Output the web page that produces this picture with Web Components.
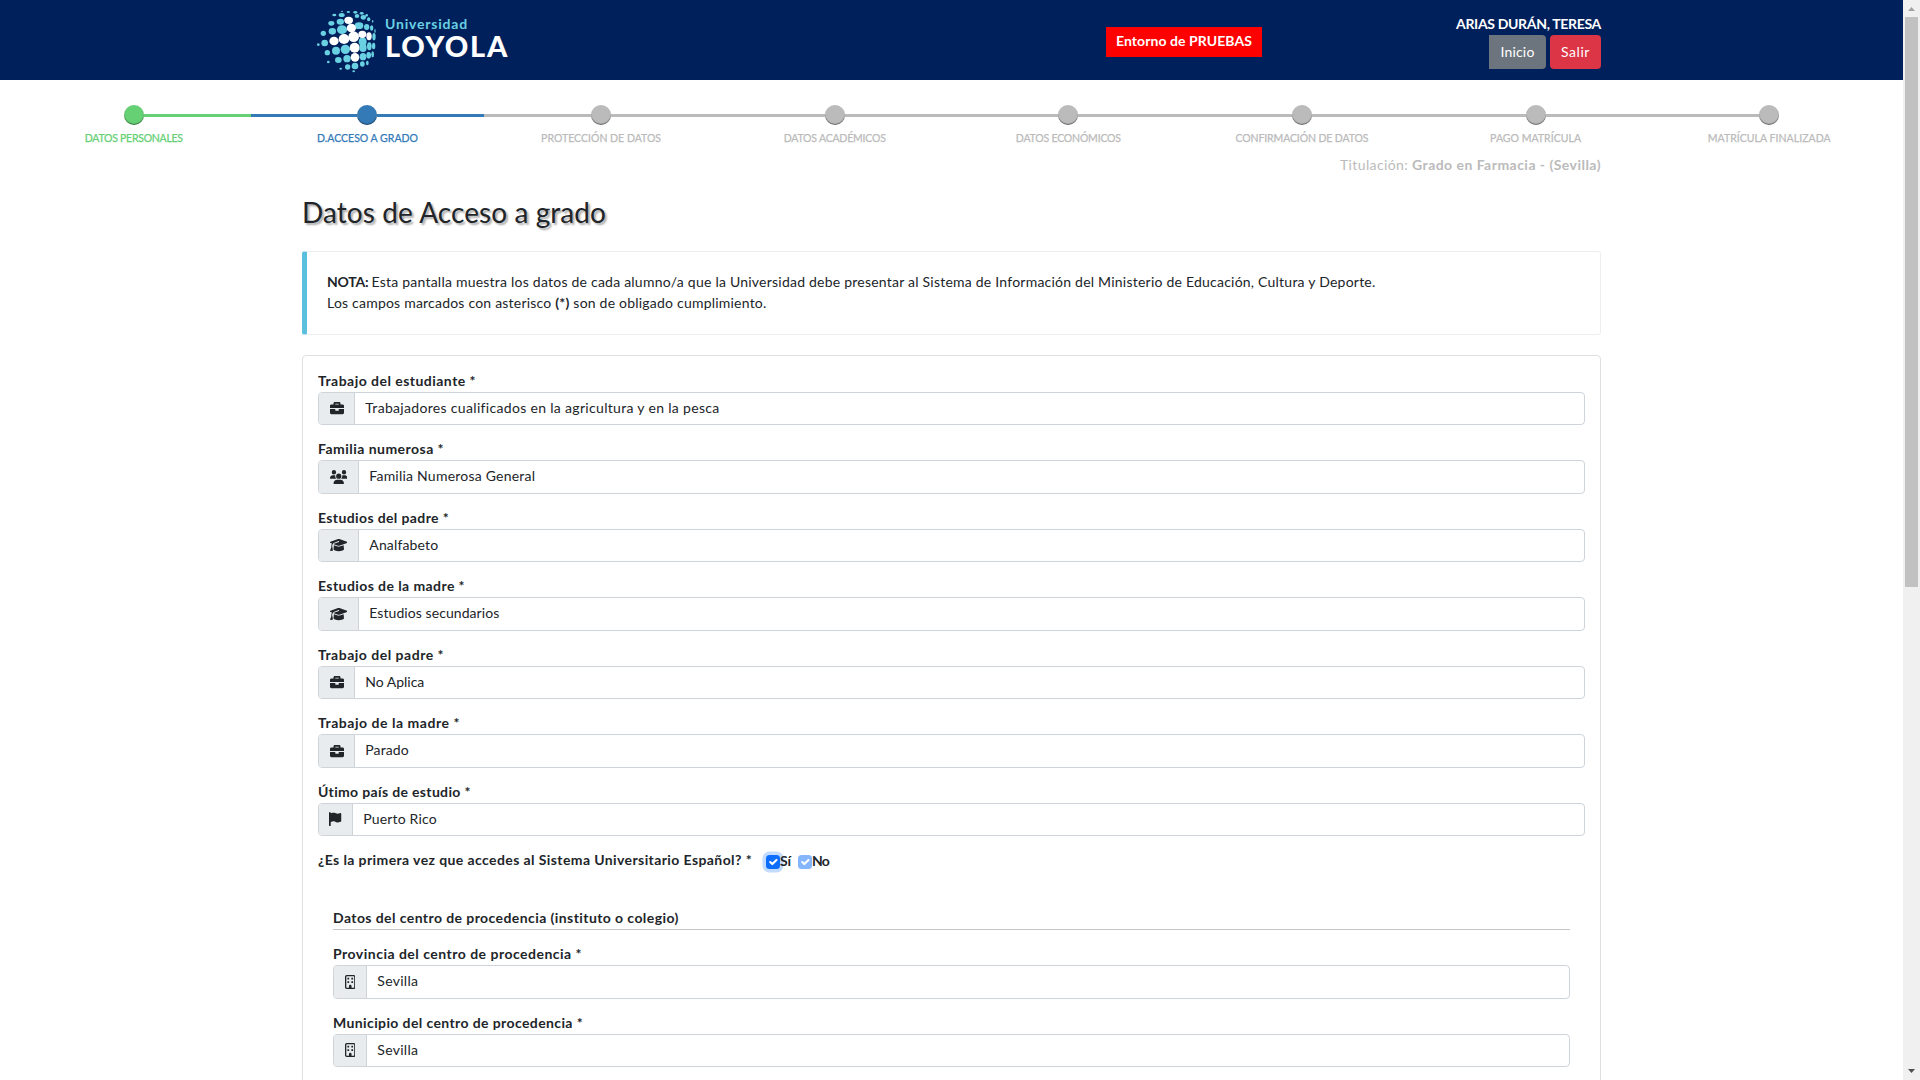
<!DOCTYPE html>
<html lang="es">
<head>
<meta charset="utf-8">
<title>Datos de Acceso a grado</title>
<style>
html,body{margin:0;height:100%;overflow:hidden;background:#fff}
body{font:14px/21px Lato,"Open Sans",sans-serif;color:#212529}
</style>
</head>
<body>
<enrol-page></enrol-page>
<script>
const ICONS = {
  briefcase: ['0 0 512 512', 'M320 336c0 8.800-7.200 16-16 16h-96c-8.800 0-16-7.200-16-16v-48H0v144c0 25.600 22.400 48 48 48h416c25.600 0 48-22.400 48-48V288H320v48zm144-208h-80V80c0-25.600-22.400-48-48-48H176c-25.600 0-48 22.400-48 48v48H48c-25.600 0-48 22.400-48 48v80h512v-80c0-25.600-22.400-48-48-48zm-144 0H192V96h128v32z', 14],
  users: ['0 0 640 512', 'M144 0a80 80 0 1 1 0 160 80 80 0 1 1 0-160zM512 0a80 80 0 1 1 0 160 80 80 0 1 1 0-160zM0 298.700C0 239.800 47.800 192 106.700 192h42.700c15.900 0 31 3.500 44.600 9.700-1.300 7.200-1.900 14.700-1.900 22.300 0 38.200 16.800 72.500 43.300 96H21.300C9.600 320 0 310.400 0 298.700zM405.300 320h-.7c26.600-23.500 43.300-57.800 43.300-96 0-7.600-.7-15-1.900-22.300 13.600-6.300 28.700-9.700 44.600-9.700h42.700C592.200 192 640 239.800 640 298.700c0 11.800-9.600 21.300-21.300 21.300H405.300zM224 224a96 96 0 1 1 192 0 96 96 0 1 1-192 0zM128 485.300C128 411.700 187.700 352 261.300 352h117.400C452.300 352 512 411.700 512 485.300c0 14.700-11.900 26.700-26.700 26.700H154.700c-14.700 0-26.700-11.900-26.700-26.700z', 17.5],
  cap: ['0 0 640 512', 'M320 32c-8.100 0-16.100 1.400-23.700 4.100L15.800 137.400C6.300 140.900 0 149.900 0 160s6.300 19.100 15.800 22.600l57.900 20.900C57.300 229.300 48 259.800 48 291.900V320c0 28.400-10.800 57.700-22.300 80.800-6.500 13-13.900 25.800-22.500 37.600C0 442.700-.9 448.300.9 453.400s6 8.900 11.200 10.200l64 16c4.200 1.100 8.700.3 12.400-2s6.300-6.100 7.100-10.400c8.600-42.800 4.300-81.200-2.100-108.700C90.300 344.300 86 329.800 80 316.500V291.900c0-30.200 10.200-58.700 27.900-81.500 12.900-15.500 29.600-28 49.200-35.700l157-61.700c8.200-3.200 17.500.8 20.700 9s-.8 17.500-9 20.700l-157 61.700c-12.400 4.900-23.300 12.400-32.200 21.600l159.600 57.600c7.600 2.700 15.600 4.100 23.700 4.100s16.100-1.400 23.700-4.100L624.200 182.600c9.500-3.400 15.800-12.500 15.800-22.600s-6.300-19.100-15.800-22.600L343.700 36.100C336.100 33.400 328.100 32 320 32zM128 408c0 35.300 86 72 192 72s192-36.700 192-72L496.700 262.600 354.500 314c-11.100 4-22.800 6-34.500 6s-23.500-2-34.500-6L143.300 262.600 128 408z', 17.500],
  flag: ['0 0 512 512', 'M64 32C64 14.300 49.700 0 32 0S0 14.300 0 32v464c0 8.800 7.200 16 16 16h32c8.800 0 16-7.200 16-16V364l64-16c41-10.300 84.500-5.500 122.300 13.400 44.200 22.100 95.500 24.800 141.700 7.400l34.700-13c12.500-4.700 20.800-16.600 20.800-30V66.100c0-23-24.200-38-44.800-27.700l-9.600 4.800c-46.300 23.200-100.800 23.200-147.100 0C214.600 25.600 174.200 21.200 136 30.700L64 48V32z', 14],
  building: ['0 0 384 512', 'M64 48c-8.800 0-16 7.200-16 16v384c0 8.800 7.200 16 16 16h80v-64c0-26.500 21.500-48 48-48s48 21.500 48 48v64h80c8.800 0 16-7.200 16-16V64c0-8.800-7.200-16-16-16H64zM0 64C0 28.700 28.700 0 64 0h256c35.300 0 64 28.700 64 64v384c0 35.300-28.700 64-64 64H64c-35.300 0-64-28.700-64-64V64zm88 40h64v64H88zM232 104h64v64h-64zM88 232h64v64H88zM232 232h64v64h-64z', 10.500]
};

function define(name, html, setup) {
  const t = document.createElement('template');
  t.innerHTML = html;
  customElements.define(name, class extends HTMLElement {
    connectedCallback() {
      if (this.shadowRoot) return;
      const root = this.attachShadow({mode: 'open'});
      root.append(t.content.cloneNode(true));
      if (setup) setup.call(this, root);
    }
  });
}

/* Text tracked to a given advance width. */
define('fit-text', `<style>:host{display:inline-block;white-space:nowrap}</style><span><slot></slot></span>`,
function (root) {
  const want = parseFloat(this.getAttribute('w'));
  const span = root.querySelector('span');
  const n = this.textContent.length;
  const natural = span.getBoundingClientRect().width;
  span.style.letterSpacing = ((want - natural) / n) + 'px';
});

define('uni-logo', `<style>
:host{display:flex;align-items:flex-start;font-family:Lato,sans-serif;font-weight:700}
svg{display:block;width:62px;height:66px}
.w{display:flex;flex-direction:column;padding:5px 0 0 7px}
.u{color:#6ad1e3;font-size:14px;line-height:20px}
.l{color:#fff;font-size:29px;line-height:26px;font-weight:900;margin-top:-1px}
</style><svg viewBox="0 0 186 198"></svg>
<div class="w"><fit-text class="u" w="83">Universidad</fit-text><fit-text class="l" w="124">LOYOLA</fit-text></div>`,
function (root) {
  /* x, y, rx, ry, white */
  const dots = [[78,7,3,2],[97,9,5,3],[118,10,6,4],[137,13,6,4],[152,19,4,4],
  [55,18,6,4],[77,18,9,6],[123,21,7,6],[142,25,8,7],[158,31,5,6],[170,37,2,4],
  [46,43,9,7],[73,38,11,9],[98,34,13,11,1],[129,50,13,10],[152,54,8,9],[167,57,5,8],[177,66,2,6],
  [22,73,8,8],[49,67,11,10],[78,62,15,13],[106,57,14,13,1],[140,98,12,13],[113,83,16,16,1],[139,76,12,11,1],[159,82,8,12,1],[174,83,5,11],
  [7,107,4,4],[26,102,10,10],[54,96,14,13,1],[84,90,16,15,1],
  [34,131,8,8],[60,125,12,12],[88,121,14,14],[116,116,15,15,1],[141,116,11,13],[160,112,7,12],[173,111,5,10],
  [37,159,4,4],[67,153,10,9],[93,149,11,11],[117,145,13,13,1],[141,143,10,11],[158,139,7,10],[170,136,4,9],
  [95,174,8,8],[117,171,10,10],[139,165,7,8],[154,162,4,7],[74,179,4,3],[113,187,4,3]];
  root.querySelector('svg').innerHTML = dots.map(d =>
    `<ellipse cx="${d[0]}" cy="${d[1]}" rx="${d[2]}" ry="${d[3]}" fill="${d[4] ? '#fff' : '#6ad1e3'}"/>`).join('');
});

define('app-header', `<style>
:host{display:block;height:80px;background:#00205b;color:#fff}
.in{width:1299px;margin-left:302px;display:flex;height:80px}
uni-logo{margin:9px 0 0 14px}
.env{margin:27px 0 0 auto;width:156px;height:30px;background:red;font-weight:700;display:flex;justify-content:center;line-height:27px}
.user{margin-left:194px;width:145px;padding-top:13px;display:flex;flex-direction:column;align-items:flex-end}
.name{font-weight:700}
.btns{display:flex;gap:4px;margin-top:1px}
.b{height:34px;line-height:33px;display:flex;justify-content:center;border-radius:4px}
.i{width:57px;background:#6c757d;border-radius:0 4px 4px 0}
.s{width:51px;background:#dc3545}
</style><div class="in"><uni-logo></uni-logo>
<div class="env"><fit-text w="136">Entorno de PRUEBAS</fit-text></div>
<div class="user"><fit-text class="name" w="145">ARIAS DURÁN, TERESA</fit-text>
<div class="btns"><div class="b i"><fit-text w="34">Inicio</fit-text></div><div class="b s"><fit-text w="29">Salir</fit-text></div></div></div></div>`);

define('step-item', `<style>
:host{flex:1;display:flex;flex-direction:column;align-items:center;--c:#bbb;color:var(--c);font-size:10.500px;font-weight:400;-webkit-text-stroke:.25px}
:host([state=done]){--c:#65d074}
:host([state=now]){--c:#337ab7}
.r{display:flex;align-items:center;align-self:stretch;height:20px}
.l{flex:1;height:3px;margin-top:1px;background:var(--c)}
.d{width:20px;height:20px;border-radius:50%;background:var(--c);box-shadow:inset 0 -1px 1px rgba(0,0,0,.45)}
:host(:first-of-type) .a,:host(:last-of-type) .z{background:none}
</style><div class="r"><div class="l a"></div><div class="d"></div><div class="l z"></div></div><slot></slot>`);

define('step-bar', `<style>
:host{display:flex;margin:25px 17px 0 17px;height:48px}
fit-text{line-height:16px;margin-top:5px}
</style>
<step-item state="done"><fit-text w="98">DATOS PERSONALES</fit-text></step-item>
<step-item state="now"><fit-text w="101">D.ACCESO A GRADO</fit-text></step-item>
<step-item><fit-text w="120">PROTECCIÓN DE DATOS</fit-text></step-item>
<step-item><fit-text w="102">DATOS ACADÉMICOS</fit-text></step-item>
<step-item><fit-text w="105">DATOS ECONÓMICOS</fit-text></step-item>
<step-item><fit-text w="133">CONFIRMACIÓN DE DATOS</fit-text></step-item>
<step-item><fit-text w="91">PAGO MATRÍCULA</fit-text></step-item>
<step-item><fit-text w="123">MATRÍCULA FINALIZADA</fit-text></step-item>`);

define('note-box', `<style>
:host{display:block;box-sizing:border-box;height:84px;border:1px solid #eee;border-left:5px solid #5bc0de;border-radius:3px;padding:19px 20px}
div{display:flex;height:21px}
b{font-weight:700}
</style><div><b><fit-text w="44.500">NOTA:&nbsp;</fit-text></b><fit-text w="1004">Esta pantalla muestra los datos de cada alumno/a que la Universidad debe presentar al Sistema de Información del Ministerio de Educación, Cultura y Deporte.</fit-text></div>
<div><fit-text w="439.500">Los campos marcados con asterisco <b>(*)</b> son de obligado cumplimiento.</fit-text></div>`);

define('form-field', `<style>
:host{display:block;height:68.500px}
.lab{height:22px;font-weight:700;display:flex}
.g{display:flex;box-sizing:border-box;height:33.400px;border:1px solid #ced4da;border-radius:4px;overflow:hidden}
.a{box-sizing:border-box;background:#e9ecef;border-right:1px solid #ced4da;display:flex;align-items:center;justify-content:center}
svg{display:block;height:14px;fill:#212529}
.v{padding-left:10.300px;line-height:30.500px;display:flex}
</style><div class="lab"></div><div class="g"><div class="a"><svg></svg></div><div class="v"></div></div>`,
function (root) {
  const [vb, d, w] = ICONS[this.getAttribute('icon')];
  const a = n => this.getAttribute(n);
  root.querySelector('.lab').innerHTML = `<fit-text w="${a('lw')}">${a('label')}</fit-text>`;
  root.querySelector('.v').innerHTML = `<fit-text w="${a('vw')}">${a('value')}</fit-text>`;
  const svg = root.querySelector('svg');
  svg.setAttribute('viewBox', vb);
  svg.style.width = w + 'px';
  svg.innerHTML = `<path d="${d}" fill-rule="evenodd"/>`;
  root.querySelector('.a').style.width = a('aw') + 'px';
});

define('check-box', `<style>
:host{display:flex;align-items:center;font-weight:700;height:21px}
.c{width:14px;height:14px;border-radius:3.500px;background:#0d6efd;margin-top:2px}
:host([focused]) .c{box-shadow:0 0 0 3.500px rgba(13,110,253,.25)}
:host([dim]) .c{opacity:.5}
svg{display:block}
</style><div class="c"><svg width="14" height="14" viewBox="0 0 20 20"><path d="M6 10l3 3 6-6" fill="none" stroke="#fff" stroke-width="3" stroke-linecap="round" stroke-linejoin="round"/></svg></div><slot></slot>`);

define('data-card', `<style>
:host{display:block;box-sizing:border-box;height:740px;border:1px solid #dfdfdf;border-radius:4px;padding:13.800px 15px 0}
.q{display:flex;height:21px;font-weight:700}
check-box{margin:1px 0 0 14px}
check-box+check-box{margin-left:7px}
.sub{margin:37px 15px 0;}
.h{height:22px;border-bottom:1px solid #c4c5c6;font-weight:700;display:flex;margin-bottom:13px}
</style>
<form-field icon="briefcase" aw="36" label="Trabajo del estudiante *" lw="158" value="Trabajadores cualificados en la agricultura y en la pesca" vw="354"></form-field>
<form-field icon="users" aw="40" label="Familia numerosa *" lw="126" value="Familia Numerosa General" vw="166"></form-field>
<form-field icon="cap" aw="40" label="Estudios del padre *" lw="131" value="Analfabeto" vw="69"></form-field>
<form-field icon="cap" aw="40" label="Estudios de la madre *" lw="147" value="Estudios secundarios" vw="130"></form-field>
<form-field icon="briefcase" aw="36" label="Trabajo del padre *" lw="126" value="No Aplica" vw="59"></form-field>
<form-field icon="briefcase" aw="36" label="Trabajo de la madre *" lw="142" value="Parado" vw="43.500"></form-field>
<form-field icon="flag" aw="34" label="Útimo país de estudio *" lw="153" value="Puerto Rico" vw="73.500"></form-field>
<div class="q"><fit-text w="434">¿Es la primera vez que accedes al Sistema Universitario Español? *</fit-text>
<check-box focused><fit-text w="11">Sí</fit-text></check-box><check-box dim><fit-text w="17">No</fit-text></check-box></div>
<div class="sub"><div class="h"><fit-text w="346">Datos del centro de procedencia (instituto o colegio)</fit-text></div>
<form-field icon="building" aw="33" label="Provincia del centro de procedencia *" lw="249" value="Sevilla" vw="41"></form-field>
<form-field icon="building" aw="33" label="Municipio del centro de procedencia *" lw="250" value="Sevilla" vw="41"></form-field></div>`);

define('scroll-bar', `<style>
:host{display:flex;flex-direction:column;align-items:center;width:17px;height:1080px;background:#f0f0f0}
.t{width:13px;height:570px;background:#c1c1c1}
svg{display:block;width:17px;height:17px;fill:#505050}
svg:last-child{margin-top:auto}
</style><svg viewBox="0 0 17 17"><path d="M5 11h7L8.500 7z" fill="#a3a3a3"/></svg><div class="t"></div><svg viewBox="0 0 17 17"><path d="M5 6h7L8.500 10z"/></svg>`);

define('enrol-page', `<style>
:host{display:flex;height:1080px;overflow:hidden}
main{flex:1;height:1080px;overflow:hidden}
.in{width:1299px;margin-left:302px}
.tit{display:flex;justify-content:flex-end;color:#bbb;height:21px;margin-top:1px}
h1{margin:20px 0 0;font-size:28px;line-height:34px;font-weight:400;text-shadow:2px 2px 2px #aaa;display:flex;height:42px}
note-box{margin-top:14px}
data-card{margin-top:20px}
b{font-weight:700}
</style><main><app-header></app-header><step-bar></step-bar>
<div class="in"><div class="tit"><fit-text w="72">Titulación:&nbsp;</fit-text><b><fit-text w="189">Grado en Farmacia - (Sevilla)</fit-text></b></div>
<h1><fit-text w="304">Datos de Acceso a grado</fit-text></h1>
<note-box></note-box><data-card></data-card></div></main><scroll-bar></scroll-bar>`);
</script>
</body>
</html>
